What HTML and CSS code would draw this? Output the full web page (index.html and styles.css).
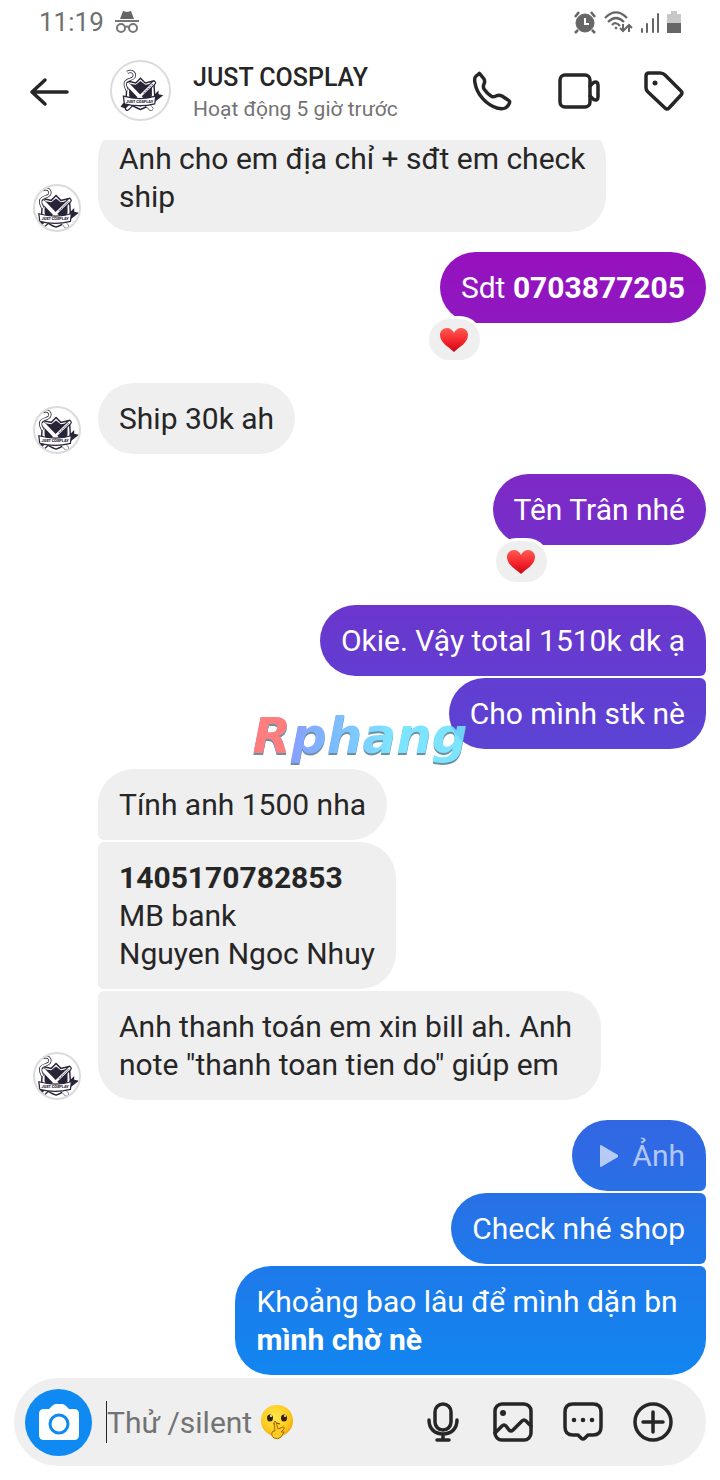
FILE: index.html
```html
<!DOCTYPE html>
<html lang="vi">
<head>
    <meta charset="UTF-8">
    <meta name="viewport" content="width=device-width, initial-scale=1.0">
    <title>JUST COSPLAY</title>
    <link rel="stylesheet" href="styles.css">
</head>
<body>
    <div class="status">
        <span>11:19</span>
        <svg width="24" height="24" viewBox="0 0 24 24">
            <path d="M5 9L8 1l4 1 4-1 3 8z" fill="#666"/>
            <path d="M0 11h24" stroke="#777" stroke-width="2"/>
            <g fill="none" stroke="#777" stroke-width="2"><circle cx="6" cy="18" r="4"/><circle cx="18" cy="18" r="4"/><path d="M10 17q2-1 4 0"/></g>
        </svg>
        <div class="status-right">
            <svg width="24" height="24" viewBox="0 0 24 24" stroke="#666">
                <circle cx="12" cy="13" r="9" fill="#666"/>
                <path d="M2 7l4-5M22 7l-4-5M5 20l-3 3M19 20l3 3" stroke-width="2.5" fill="none"/>
                <path d="M12 8v6h4" stroke="#fff" stroke-width="2" fill="none"/>
            </svg>
            <svg width="29" height="24" viewBox="0 0 29 24" fill="none" stroke="#666" stroke-width="2.2">
                <path d="M1 8q11-11 22 0M4 12q8-8 16 0M8 15q4-4 8 1"/>
                <circle cx="12" cy="18" r="1" fill="#666" stroke-width="1"/>
                <path d="M19 14v7M16 18l3 3 3-3M25 22v-7M22 18l3-3 3 3" stroke-width="2"/>
            </svg>
            <svg width="20" height="24" viewBox="0 0 20 24" stroke="#666" stroke-width="2" stroke-linecap="round">
                <path d="M2 19v3M7 14v8M13 9v13M18 4v18"/>
            </svg>
            <svg width="14" height="24" viewBox="0 0 14 24">
                <path d="M4 1h6v3h4v9H0V4h4z" fill="#c8c8c8"/>
                <path d="M0 13h14v10H0z" fill="#666"/>
            </svg>
        </div>
    </div>

    <header class="top">
        <button type="button" class="icon" aria-label="Quay lại">
            <svg viewBox="0 0 44 44"><path d="M40 23H5M18 11L5 23l13 12"/></svg>
        </button>
        <svg class="avatar avatar-large" viewBox="0 0 60 60">
            <g id="crest">
                <path d="M30 17l5 5 9-2 1 16c0 6-7 11-15 14-8-3-15-8-15-14l1-16 9 2z" fill="#fff" stroke="#2a2438" stroke-width="1.5"/>
                <path d="M30 20l5 4 7-1v12c-1 5-6 9-12 12-6-3-11-7-12-12V23l7 1z" fill="#2a2438"/>
                <path d="M17 24l24 25M44 22L16 49" stroke="#2a2438" stroke-width="5" stroke-linecap="round"/>
                <path d="M44 22L16 49" stroke="#fff" stroke-width="2.5" stroke-linecap="round"/>
                <path d="M43 23L33 33" stroke="#2a2438" stroke-width="1" stroke-dasharray="2 1"/>
                <path d="M17 24l24 25" stroke="#fff" stroke-width="4" stroke-linecap="round"/>
                <path d="M16 11c5-3 9 1 7 5-2 3-8 2-9 6-1 3 1 5 2 8" fill="none" stroke="#2a2438" stroke-width="3.4"/>
                <path d="M16 11c5-3 9 1 7 5-2 3-8 2-9 6-1 3 1 5 2 8" fill="none" stroke="#fff" stroke-width="1.8"/>
                <path d="M44 35l5-5v4l5 1-9 7zM12 43l-3 4 5 2 3-4z" fill="#2a2438"/>
                <path d="M12 36q18 5 34 0l-1 8q-16 4-32 0z" fill="#fff" stroke="#2a2438" stroke-width="1.3"/>
                <text x="29" y="43" text-anchor="middle" font-family="Roboto, sans-serif" font-size="4" font-weight="900" fill="#2a2438">JUST COSPLAY</text>
            </g>
        </svg>
        <div class="who">
            <h1>JUST COSPLAY</h1>
            <p>Hoạt động 5 giờ trước</p>
        </div>
        <nav class="actions">
            <button type="button" class="icon" aria-label="Gọi">
                <svg viewBox="0 0 44 44"><path d="M9 5C5 7 4 9 5 14c2 12 12 22 22 25 7 2 10 0 12-4 1-2 1-3-1-4l-6-4c-2-1-4-1-6 0-2 1-4 1-5 0-3-2-5-4-7-7-1-2-1-3 0-5 1-2 1-3 0-5l-4-5c-1-1-1-1-1 0z"/></svg>
            </button>
            <button type="button" class="icon" aria-label="Gọi video">
                <svg viewBox="0 0 44 44"><rect x="4" y="6" width="30" height="32" rx="5"/><path d="M34 17l3-3c3-2 5-1 5 2v12c0 3-2 4-5 2l-3-3"/></svg>
            </button>
            <button type="button" class="icon" aria-label="Gắn nhãn">
                <svg viewBox="0 0 44 44"><path d="M7 4h11q3 0 5 2l16 16q2 2 0 4L27 39q-2 2-4 0L6 23q-2-2-2-4V7q0-3 3-3z"/><circle class="dot" cx="13" cy="14" r="2.5"/></svg>
            </button>
        </nav>
    </header>

    <main class="thread">
        <div class="group in">
            <svg class="avatar" viewBox="8 7 46 46"><use href="#crest"/></svg>
            <div class="stack">
                <p class="bubble">Anh cho em địa chỉ + sđt em check<br>ship</p>
            </div>
        </div>
        <div class="group out reacted">
            <div class="bubble">Sdt <b>0703877205</b>
                <span class="reaction reaction-outer"><svg viewBox="0 0 28 24"><path id="heart" d="M14 24C9 19 0 15 0 7c0-4 3-7 7-7 3 0 6 2 7 5 1-3 4-5 7-5 4 0 7 3 7 7 0 8-9 12-14 17z" fill="url(#red)"/></svg></span>
            </div>
        </div>
        <div class="group in">
            <svg class="avatar" viewBox="8 7 46 46"><use href="#crest"/></svg>
            <div class="stack">
                <p class="bubble">Ship 30k ah</p>
            </div>
        </div>
        <div class="group out reacted">
            <div class="bubble">Tên Trân nhé
                <span class="reaction"><svg viewBox="0 0 28 24"><use href="#heart"/></svg></span>
            </div>
        </div>
        <div class="group out">
            <p class="bubble">Okie. Vậy total 1510k dk ạ</p>
            <p class="bubble">Cho mình stk nè</p>
        </div>
        <div class="group in">
            <svg class="avatar" viewBox="8 7 46 46"><use href="#crest"/></svg>
            <div class="stack">
                <p class="bubble">Tính anh 1500 nha</p>
                <p class="bubble"><b>1405170782853</b><br>MB bank<br>Nguyen Ngoc Nhuy</p>
                <p class="bubble">Anh thanh toán em xin bill ah. Anh&nbsp;<br>note "thanh toan tien do" giúp em</p>
            </div>
        </div>
        <div class="group out">
            <p class="bubble photo"><svg width="18" height="22" viewBox="0 0 18 22"><path d="M0 1q0-1 1-1l17 10q0 1 0 2L1 22q-1 0-1-1z"/></svg>Ảnh</p>
            <p class="bubble">Check nhé shop</p>
            <p class="bubble">Khoảng bao lâu để mình dặn bn&nbsp;<br><b>mình chờ nè</b></p>
        </div>
    </main>

    <form class="composer">
        <button type="button" class="camera" aria-label="Máy ảnh">
            <svg width="40" height="36" viewBox="0 0 40 36">
                <path d="M5 5h5l3-3q2-2 4-2h6q2 0 4 2l3 3h5q5 0 5 5v21q0 5-5 5H5q-5 0-5-5V10q0-5 5-5z" fill="#fff"/>
                <circle cx="20" cy="20" r="9" fill="#fff" stroke="#0f8af2" stroke-width="3"/>
            </svg>
        </button>
        <input type="text" placeholder="Thử /silent" aria-label="Tin nhắn">
        <svg class="shush" viewBox="0 0 34 36">
            <defs>
                <linearGradient id="red" x1="0" y1="0" x2="0" y2="1">
                    <stop offset="0" stop-color="#ff5b50"/>
                    <stop offset="0.6" stop-color="#f3202a"/>
                    <stop offset="1" stop-color="#c40a14"/>
                </linearGradient>
                <radialGradient id="yellow" cx="0.45" cy="0.35" r="0.65">
                    <stop offset="0" stop-color="#ffe94a"/>
                    <stop offset="0.7" stop-color="#fdc81c"/>
                    <stop offset="1" stop-color="#ee9c0c"/>
                </radialGradient>
            </defs>
            <path d="M17 1c10 0 16 7 16 16 0 8-6 13-11 15-2 3-7 4-9 0C7 30 1 25 1 17 1 8 7 1 17 1z" fill="url(#yellow)"/>
            <ellipse cx="10" cy="14" rx="3" ry="3.5" fill="#33200c"/>
            <ellipse cx="24" cy="14" rx="3" ry="3.5" fill="#33200c"/>
            <circle cx="11" cy="12" r="1" fill="#fff"/>
            <circle cx="25" cy="12" r="1" fill="#fff"/>
            <path d="M13 20q3-2 7 0" stroke="#6b4208" fill="none"/>
            <path d="M15 27l-1-9q1-2 2 0l2 7 5-2q2 0 1 2l-3 3 3 0-3 5q-3 3-7 1-4-3-1-7z" fill="#fccb25" stroke="#a86a05"/>
        </svg>
        <div class="tools">
            <button type="button" class="icon" aria-label="Ghi âm">
                <svg viewBox="0 0 44 44"><rect x="14" y="4" width="16" height="26" rx="8"/><path d="M8 20c0 9 6 14 14 14s14-5 14-14M22 34v6M16 40h12"/></svg>
            </button>
            <button type="button" class="icon" aria-label="Ảnh">
                <svg viewBox="0 0 44 44"><rect x="4" y="4" width="36" height="36" rx="7"/><path d="M4 33l7-7q2-2 4 0l3 4q2 2 4 0l9-9q2-2 4 0l5 5"/><circle class="dot" cx="12" cy="13" r="3"/></svg>
            </button>
            <button type="button" class="icon" aria-label="Trả lời nhanh">
                <svg viewBox="0 0 44 44"><path d="M12 4h20q8 0 8 8v15q0 8-8 8h-5l-3 3q-2 2-4 0l-3-3h-5q-8 0-8-8V12q0-8 8-8z"/><g class="dot"><circle cx="13" cy="20" r="2.3"/><circle cx="22" cy="20" r="2.3"/><circle cx="31" cy="20" r="2.3"/></g></svg>
            </button>
            <button type="button" class="icon" aria-label="Thêm">
                <svg viewBox="0 0 44 44"><circle cx="22" cy="22" r="18"/><path d="M22 12v20M12 22h20"/></svg>
            </button>
        </div>
    </form>

    <div class="watermark"><span>R</span>phang</div>
</body>
</html>
```

FILE: styles.css
```css
* {
    box-sizing: border-box;
    margin: 0;
    padding: 0;
}

body {
    font-family: Roboto, sans-serif;
    font-size: 30px;
    line-height: 38px;
    color: #262626;
    background-color: #fff;
    display: flex;
    flex-direction: column;
    height: 100vh;
    overflow: hidden;
}

button {
    background: none;
    border: none;
    cursor: pointer;
}

svg {
    display: block;
    flex-shrink: 0;
}

/* status bar */
.status {
    display: flex;
    align-items: center;
    gap: 11px;
    height: 43px;
    padding: 0 39px;
    font-size: 26px;
    color: #707070;
}

.status-right {
    display: flex;
    gap: 7px;
    margin-left: auto;
}

/* header */
.top {
    display: flex;
    align-items: center;
    height: 97px;
    padding: 0 34px 2px 27px;
}

.icon {
    width: 44px;
    height: 44px;
}

.icon svg {
    width: 44px;
    height: 44px;
    fill: none;
    stroke: #262626;
    stroke-width: 3.5;
    stroke-linecap: round;
    stroke-linejoin: round;
}

.icon .dot {
    fill: #262626;
    stroke: none;
}

.avatar {
    width: 48px;
    height: 48px;
    border: 2px solid #dbdbdb;
    border-radius: 50%;
}

.avatar-large {
    width: 61px;
    height: 61px;
    margin: 0 22px 0 39px;
}

.who {
    padding-top: 4px;
}

.who h1 {
    font-size: 25px;
    font-weight: 500;
    line-height: 32px;
}

.who p {
    font-size: 21px;
    line-height: 30px;
    color: #737373;
}

.actions {
    display: flex;
    gap: 42px;
    margin-left: auto;
}

/* messages, newest at the bottom */
.thread {
    flex: 1;
    min-height: 0;
    display: flex;
    flex-direction: column;
    justify-content: flex-end;
    gap: 20px;
    padding: 0 14px 0 33px;
    overflow: hidden;
}

.group {
    display: flex;
    gap: 17px;
    align-items: flex-end;
}

.stack,
.out {
    display: flex;
    flex-direction: column;
    gap: 2px;
}

.stack {
    align-items: flex-start;
}

.reacted {
    margin-bottom: 40px;
}

.bubble {
    position: relative;
    padding: 17px 21px 16px;
    border-radius: 36px;
}

.in .bubble {
    background-color: #efefef;
}

.in .bubble:not(:first-child) {
    border-top-left-radius: 6px;
}

.in .bubble:not(:last-child) {
    border-bottom-left-radius: 6px;
}

.out .bubble {
    color: #fff;
    background: linear-gradient(#a800b4 0%, #9611be 17%, #7b2bc7 34%, #6739cf 43%, #5f40d3 48%, #2e6ae4 78%, #2375e8 83%, #1186f0 93%) fixed;
}

.out .bubble:not(:first-child) {
    border-top-right-radius: 6px;
}

.out .bubble:not(:last-child) {
    border-bottom-right-radius: 6px;
}

.out .photo {
    display: flex;
    align-items: center;
    gap: 14px;
    padding-left: 28px;
    color: rgba(255, 255, 255, 0.65);
}

.photo svg {
    fill: currentColor;
}

.reaction {
    position: absolute;
    left: 0;
    top: 64px;
    display: flex;
    align-items: center;
    justify-content: center;
    width: 57px;
    height: 47px;
    border: 3px solid #fff;
    border-radius: 24px;
    background-color: #efefef;
}

.reaction-outer {
    left: -14px;
}

.reaction svg {
    width: 28px;
    height: 24px;
}

/* message box */
.composer {
    display: flex;
    align-items: center;
    height: 88px;
    margin: 3px 14px 14px;
    padding: 0 31px 0 11px;
    border-radius: 44px;
    background-color: #efefef;
}

.camera {
    display: flex;
    align-items: center;
    justify-content: center;
    width: 67px;
    height: 67px;
    margin-right: 14px;
    border-radius: 50%;
    background-color: #0f8af2;
}

.composer input {
    width: 154px;
    height: 42px;
    border: none;
    border-left: 1px solid #262626;
    outline: none;
    background: none;
    font: inherit;
}

.composer input::placeholder {
    color: #737373;
}

.shush {
    width: 34px;
    height: 36px;
}

.tools {
    display: flex;
    gap: 26px;
    margin-left: auto;
}

.watermark {
    position: absolute;
    top: 50%;
    left: 50%;
    transform: translate(-50%, -50%);
    padding-bottom: 8px;
    font-family: "DejaVu Sans", sans-serif;
    font-size: 50px;
    font-style: italic;
    font-weight: bold;
    line-height: 72px;
    color: transparent;
    background: linear-gradient(90deg, #7a98ff 20%, #6fb4ff 38%, #70e2ff 65%);
    background-clip: text;
    -webkit-background-clip: text;
    filter: drop-shadow(0 2px 0 #5d8494);
    opacity: 0.9;
    pointer-events: none;
}

.watermark span {
    color: #ff7070;
}
```
